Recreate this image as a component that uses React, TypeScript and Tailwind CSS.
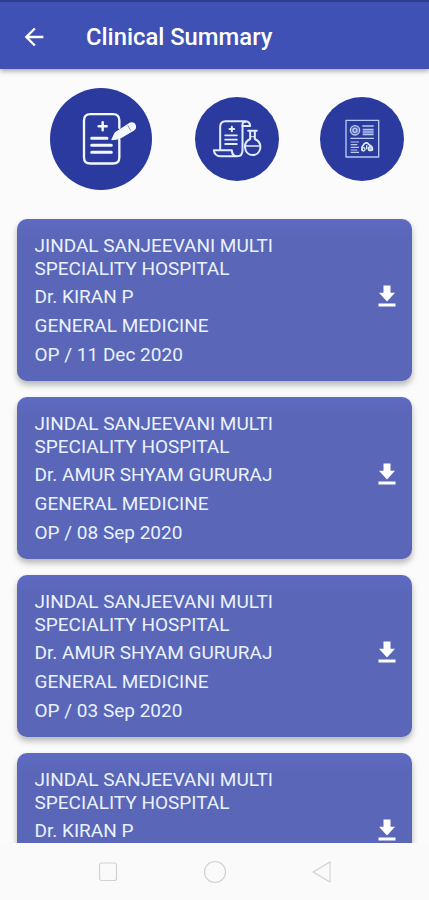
import React from "react";

interface Visit {
  doctor: string;
  department?: string;
  date?: string;
}

const visits: Visit[] = [
  { doctor: "Dr. KIRAN P", department: "GENERAL MEDICINE", date: "OP / 11 Dec 2020" },
  { doctor: "Dr. AMUR SHYAM GURURAJ", department: "GENERAL MEDICINE", date: "OP / 08 Sep 2020" },
  { doctor: "Dr. AMUR SHYAM GURURAJ", department: "GENERAL MEDICINE", date: "OP / 03 Sep 2020" },
  { doctor: "Dr. KIRAN P" },
];

function NotesIcon() {
  return (
    <svg viewBox="30 22.5 306 306" className="size-full" fill="none" stroke="#f4f8ff" strokeLinecap="round" strokeLinejoin="round">
      <path d="M238 142V120Q238 101 219 101H151Q132 101 132 120V230Q132 249 151 249H219Q238 249 238 230V178" strokeWidth="7" />
      <path d="M188 125V149M176 137H200" strokeWidth="7.5" />
      <path d="M155 173H201M155 194H214M155 215H214" strokeWidth="9" />
      <path d="M216 177L226 157L271 128Q282 125 286 136Q288 144 280 149L238 174Z" fill="#f4f8ff" strokeWidth="4" />
      <path d="M264 136L272 150" stroke="#7580bd" strokeWidth="2.5" />
    </svg>
  );
}

function LabIcon() {
  return (
    <svg viewBox="28.5 36 252 252" className="size-full" fill="none" stroke="#e2edff" strokeWidth="6" strokeLinecap="round" strokeLinejoin="round">
      <path d="M104 193V126Q104 109 120 109H180Q193 110 194 123H171V196Q171 214 155 214H105Q87 213 85 196H139Q140 214 155 214" />
      <path d="M171 123Q169 111 180 110" />
      <path d="M139 125V139M132 132H146" strokeWidth="6" />
      <path d="M119 151H154M119 164H154M119 177H154" strokeWidth="5.5" />
      <path d="M188 137H214M194 138V162C181 168 177 178 179 190C183 216 219 217 224 191C226 178 220 167 208 162V138" />
      <path d="M183 183H220" strokeWidth="5" />
      <path d="M195 155H207" strokeWidth="3" />
    </svg>
  );
}

function ReportIcon() {
  return (
    <svg viewBox="30 36 252 252" className="size-full" fill="none" stroke="#b8c9f4" strokeWidth="4" strokeLinejoin="round">
      <rect x="108" y="106" width="98" height="110" />
      <circle cx="135" cy="136" r="14" fill="#5969b9" />
      <circle cx="135" cy="136" r="6" />
      <path d="M157 123H191M121 160H192" />
      <path d="M158 134H191M158 141H191M158 148H191" strokeWidth="5" />
      <path d="M122 171H147M122 179H142M122 187H147M122 195H142M122 202H147" strokeWidth="3.5" />
      <path d="M156 196V186L163 176Q171 170 177 179Q189 183 187 197" stroke="#dce9ff" strokeWidth="5" />
      <circle cx="160" cy="193" r="5" stroke="#dce9ff" />
      <circle cx="181" cy="191" r="6" stroke="#dce9ff" fill="#a6b8ed" />
      <path d="M170 181V193" stroke="#dce9ff" />
    </svg>
  );
}

function VisitCard({ doctor, department, date }: Visit) {
  return (
    <article className="flex h-[162px] shrink-0 items-start justify-between rounded-[10px] bg-[#5a66b7] bg-linear-to-b from-[#5f6bc3] to-[#5a66b7] to-[12%] pl-[17.5px] pr-[13.5px] pt-[16px] text-[19px] text-[#eaf2ff] shadow-[0_4px_6px_rgba(0,0,0,0.28)]">
      <div>
        <p className="w-[270px] leading-[22.7px]">JINDAL SANJEEVANI MULTI SPECIALITY HOSPITAL</p>
        <p className="mt-[3px] leading-[28.7px]">{doctor}</p>
        {department && <p className="leading-[28.7px]">{department}</p>}
        {date && <p className="leading-[28.7px]">{date}</p>}
      </div>
      <svg viewBox="0 0 24 24" className="mt-[47px] h-[28.5px] w-[24px] fill-white" preserveAspectRatio="none" aria-label="Download">
        <path d="M20 9h-4.5V3h-7v6H4l8 7.5L20 9zM3.5 18.1v2.5h17v-2.5h-17z" />
      </svg>
    </article>
  );
}

export default function App() {
  return (
    <div className="flex h-[900px] w-[429px] flex-col overflow-hidden bg-[#fbfbfb] font-[Roboto,sans-serif]">
      <header className="z-10 flex h-[69px] shrink-0 items-center border-t-2 border-[#2c3b8c] bg-[#3f51b5] pl-[20px] pt-[2px] shadow-[0_2px_5px_rgba(0,0,0,0.35)]">
        <svg viewBox="0 0 24 24" className="size-[28px] fill-white" aria-label="Back">
          <path d="M20 11H7.83l5.59-5.59L12 4l-8 8 8 8 1.41-1.41L7.83 13H20v-2z" />
        </svg>
        <h1 className="ml-[38px] text-[23.8px] font-medium leading-7 text-white">Clinical Summary</h1>
      </header>
      <nav className="flex h-[139px] shrink-0 items-center pl-[50px]">
        <button className="size-[102px] shrink-0 rounded-full bg-[#2b3a9f]"><NotesIcon /></button>
        <button className="ml-[42.5px] size-[84px] shrink-0 rounded-full bg-[#2b3a9f]"><LabIcon /></button>
        <button className="ml-[41.5px] size-[84px] shrink-0 rounded-full bg-[#2b3a9f]"><ReportIcon /></button>
      </nav>
      <main className="flex min-h-0 flex-1 flex-col gap-[16px] overflow-hidden px-[17px] pt-[11px]">
        {visits.map((visit, index) => <VisitCard key={index} {...visit} />)}
      </main>
      <footer className="z-10 flex h-[57px] shrink-0 items-center justify-between bg-[#fafafa] pl-[98px] pr-[97px]">
        <svg viewBox="0 0 20 20" className="size-5" fill="none" stroke="#d2d2d2" strokeWidth="1.2"><rect x="1.5" y="1" width="17" height="17.5" rx="2" /></svg>
        <svg viewBox="0 0 24 24" className="size-6" fill="none" stroke="#d2d2d2" strokeWidth="1.2"><circle cx="12" cy="12" r="10.5" /></svg>
        <svg viewBox="0 0 20 22" className="h-[22px] w-5" fill="none" stroke="#d2d2d2" strokeWidth="1.2" strokeLinejoin="round"><path d="M18 1V21L1 11Z" /></svg>
      </footer>
    </div>
  );
}
